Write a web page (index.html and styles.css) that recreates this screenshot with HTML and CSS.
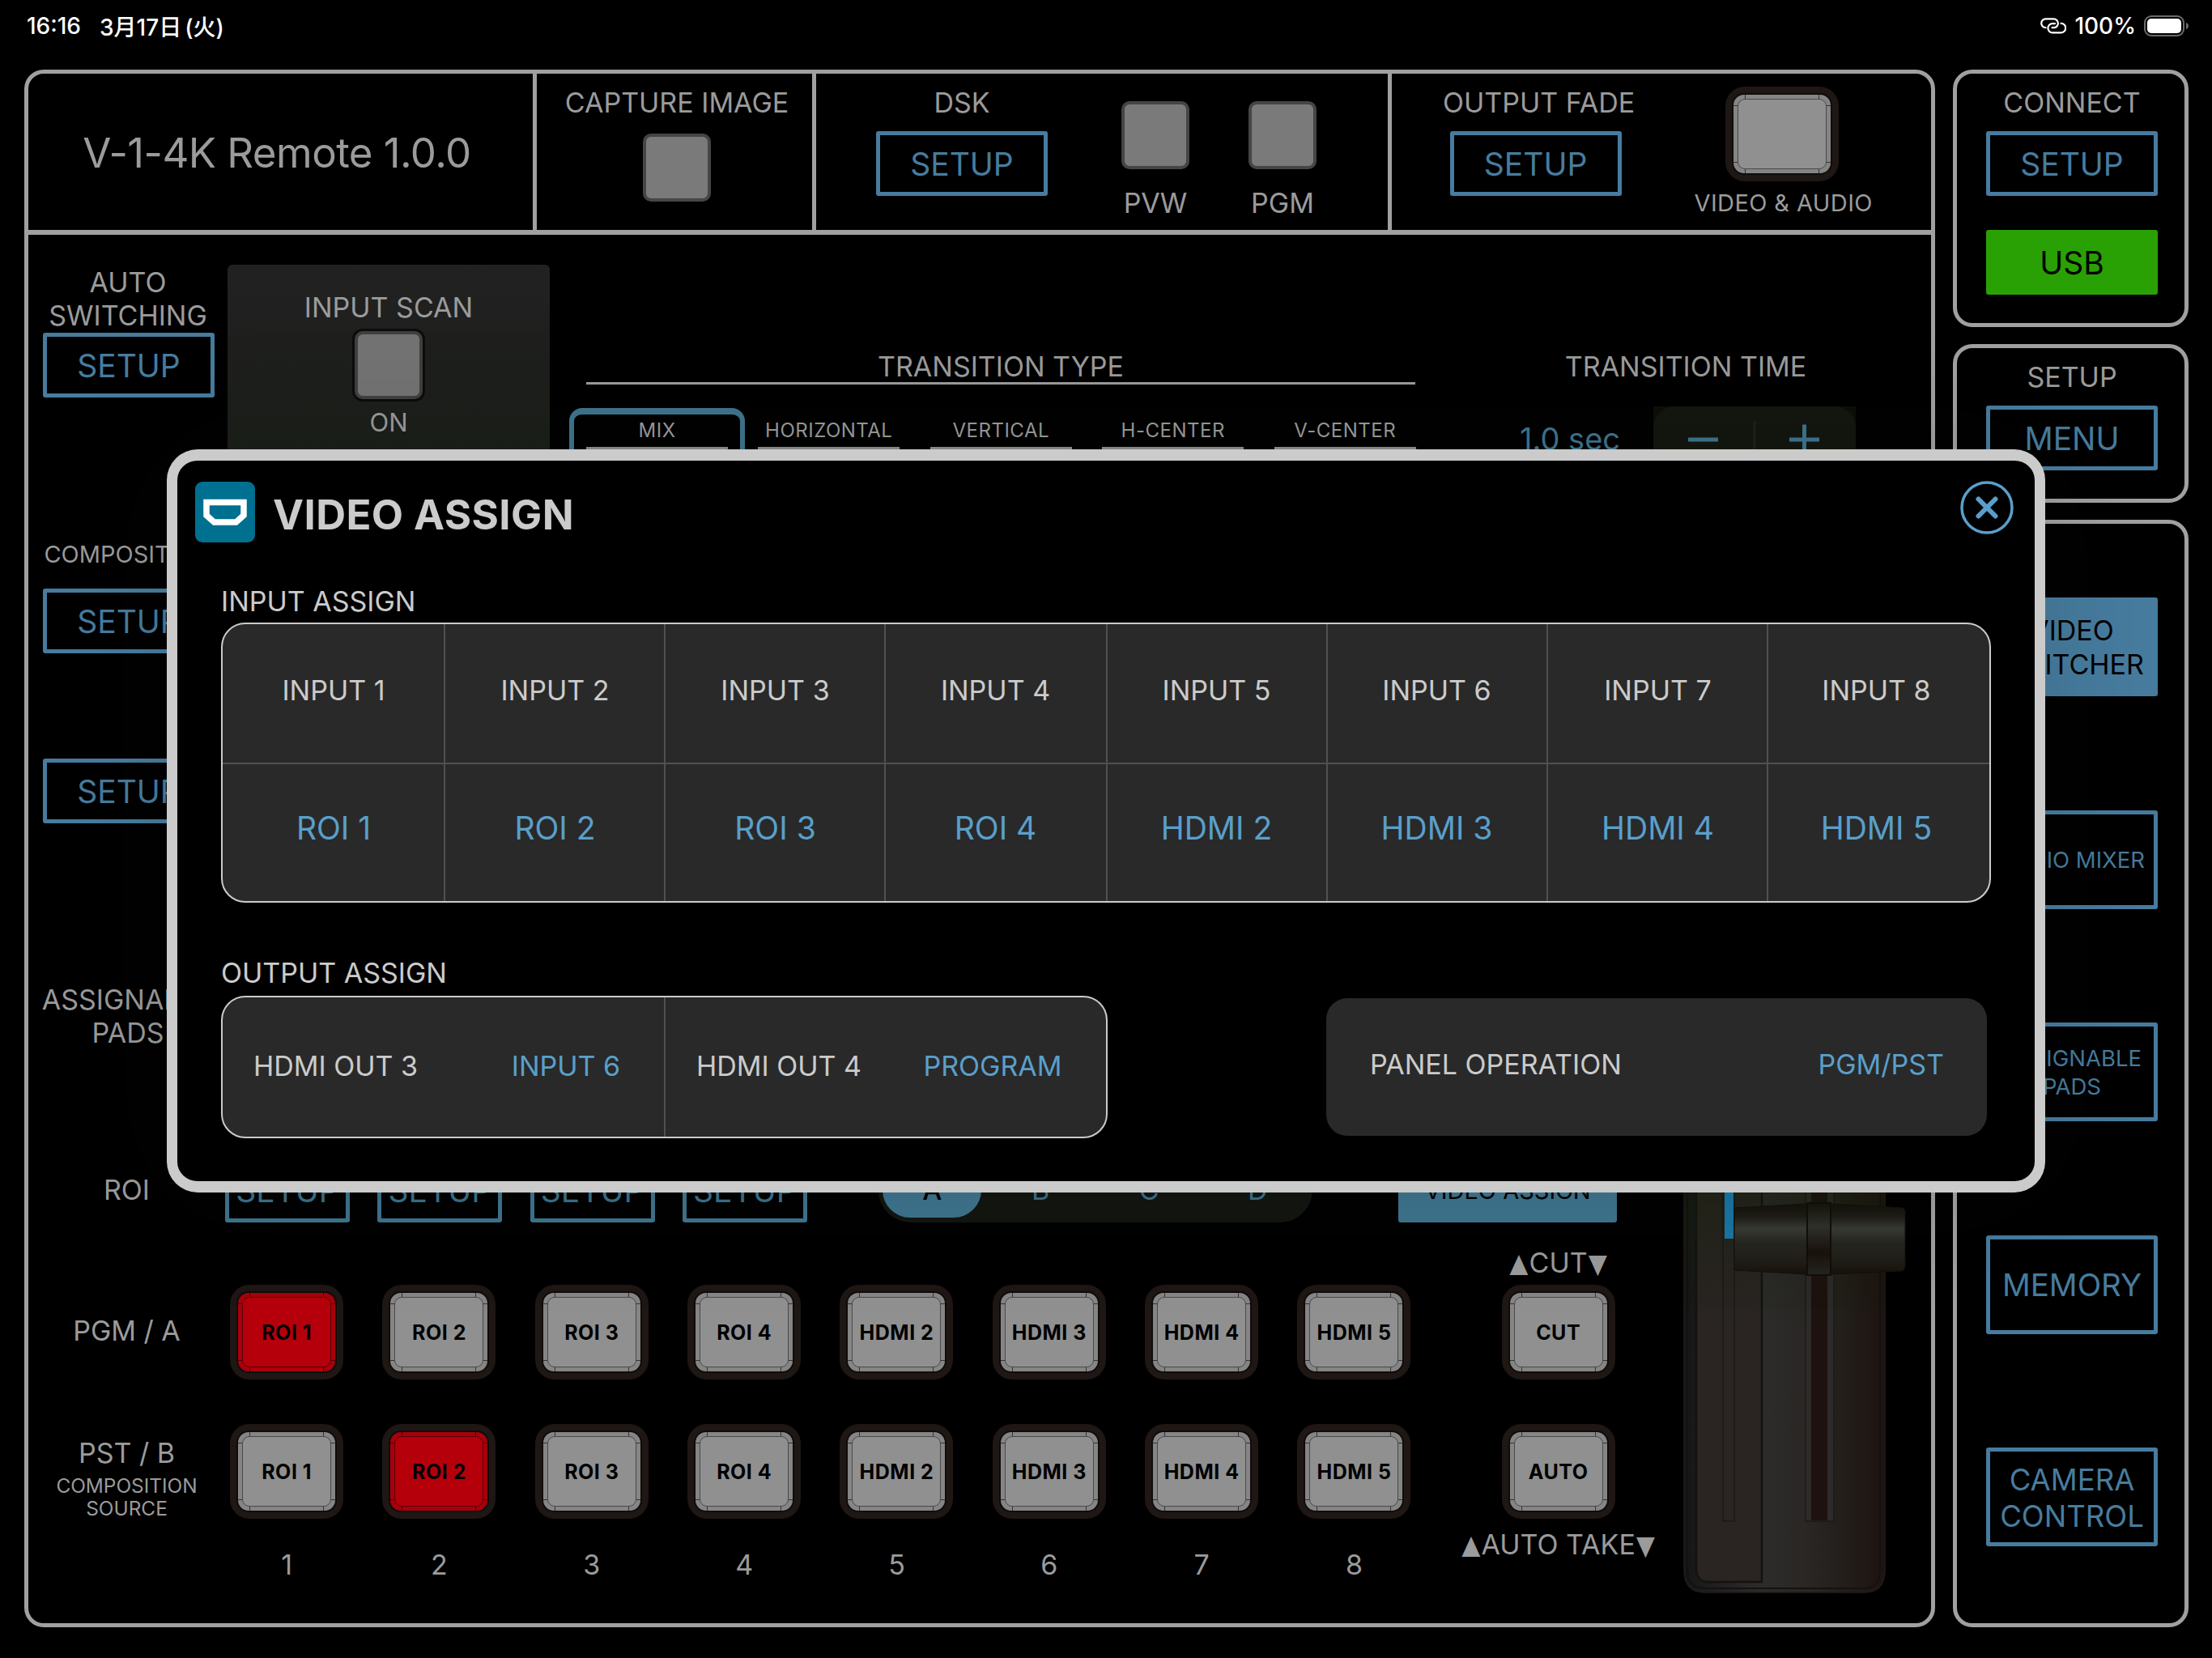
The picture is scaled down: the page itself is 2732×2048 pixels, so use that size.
FILE: index.html
```html
<!DOCTYPE html>
<html lang="ja">
<head>
  <meta charset="UTF-8" />
  <meta name="viewport" content="width=device-width, initial-scale=1.0"/>
  <title>V-1-4K Remote</title>
  <link rel="stylesheet" href="styles.css">
</head>
<body>
  <div class="status">
    <span class="time">16:16</span>
    <span class="date">3月17日<span class="day">(火)</span></span>
    <svg class="link-icon" width="32" height="20" viewBox="0 0 32 20" fill="none" stroke="#fff" stroke-width="2.2" stroke-linecap="round">
      <path d="M6.500 12.200A5.400 5.400 0 0 1 6.700 1.400H16.500A5.400 5.400 0 0 1 16.500 12.200H14.500"/>
      <path d="M25.500 6.800A5.800 5.800 0 0 1 25.300 18.400H15A5.600 5.600 0 0 1 15 7.200H18"/>
    </svg>
    <span class="percent">100%</span>
    <svg class="battery" width="56" height="26" viewBox="0 0 56 26">
      <rect x="1" y="1" width="48" height="24" rx="8" fill="none" stroke="#6b6b6b" stroke-width="2"/>
      <rect x="4" y="4" width="42" height="18" rx="5" fill="#fff"/>
      <path d="M52 9q3 1 3 4t-3 4z" fill="#6b6b6b"/>
    </svg>
  </div>

  <div class="screen">
    <div class="main">
      <div class="header">
        <div class="cell cell-title">V-1-4K Remote 1.0.0</div>
        <div class="cell cell-capture">
          <div class="group">
            <div class="label">CAPTURE IMAGE</div>
            <div class="square"></div>
          </div>
        </div>
        <div class="cell cell-dsk">
          <div class="group">
            <div class="label">DSK</div>
            <div class="box">SETUP</div>
          </div>
          <div class="group led">
            <div class="square"></div>
            <div class="label">PVW</div>
          </div>
          <div class="group led">
            <div class="square"></div>
            <div class="label">PGM</div>
          </div>
        </div>
        <div class="cell cell-fade">
          <div class="group">
            <div class="label fade-label">OUTPUT FADE</div>
            <div class="box">SETUP</div>
          </div>
          <div class="group fade-key">
            <div class="key"><div class="cap"><div class="face"></div></div></div>
            <div class="label small">VIDEO &amp; AUDIO</div>
          </div>
        </div>
      </div>

      <div class="body">
        <div class="names">
          <div class="label n-auto">AUTO<br>SWITCHING</div>
          <div class="box">SETUP</div>
          <div class="label small n-comp">COMPOSITION</div>
          <div class="box n-box1">SETUP</div>
          <div class="box n-box2">SETUP</div>
          <div class="label n-pads">ASSIGNABLE<br>PADS</div>
          <div class="label n-roi">ROI</div>
          <div class="label n-pgm">PGM / A</div>
          <div class="label n-pst">PST / B</div>
          <div class="label tiny">COMPOSITION<br>SOURCE</div>
        </div>

        <div class="work">
          <div class="top">
            <div class="scan">
              <div class="label">INPUT SCAN</div>
              <div class="square"></div>
              <div class="label on">ON</div>
            </div>
            <div class="trans-type">
              <div class="label head">TRANSITION TYPE</div>
              <div class="types">
                <div class="type active">MIX<i></i></div>
                <div class="type">HORIZONTAL<i></i></div>
                <div class="type">VERTICAL<i></i></div>
                <div class="type">H-CENTER<i></i></div>
                <div class="type">V-CENTER<i></i></div>
              </div>
            </div>
            <div class="trans-time">
              <div class="label">TRANSITION TIME</div>
              <div class="time-row">
                <span class="sec">1.0 sec</span>
                <div class="stepper">
                  <svg width="250" height="82" viewBox="0 0 250 82">
                    <rect width="250" height="82" rx="26" fill="#14160f"/>
                    <path d="M125 18v46" stroke="#1f201c" stroke-width="3"/>
                    <path d="M43 41h37M168 41h37M186.500 22.500v37" stroke="#3f748f" stroke-width="5"/>
                  </svg>
                </div>
              </div>
            </div>
          </div>

          <div class="bottom">
            <div class="controls">
              <div class="roi-row">
                <div class="box roi">SETUP</div>
                <div class="box roi">SETUP</div>
                <div class="box roi">SETUP</div>
                <div class="box roi">SETUP</div>
                <div class="segment">
                  <span class="seg on-seg">A</span>
                  <span class="seg">B</span>
                  <span class="seg">C</span>
                  <span class="seg">D</span>
                </div>
                <div class="box filled assign">VIDEO ASSIGN</div>
              </div>
              <div class="deck">
                <div class="bus">
                  <div class="key red"><div class="cap"><div class="face">ROI 1</div></div></div>
                  <div class="key"><div class="cap"><div class="face">ROI 2</div></div></div>
                  <div class="key"><div class="cap"><div class="face">ROI 3</div></div></div>
                  <div class="key"><div class="cap"><div class="face">ROI 4</div></div></div>
                  <div class="key"><div class="cap"><div class="face">HDMI 2</div></div></div>
                  <div class="key"><div class="cap"><div class="face">HDMI 3</div></div></div>
                  <div class="key"><div class="cap"><div class="face">HDMI 4</div></div></div>
                  <div class="key"><div class="cap"><div class="face">HDMI 5</div></div></div>
                  <div class="key"><div class="cap"><div class="face">ROI 1</div></div></div>
                  <div class="key red"><div class="cap"><div class="face">ROI 2</div></div></div>
                  <div class="key"><div class="cap"><div class="face">ROI 3</div></div></div>
                  <div class="key"><div class="cap"><div class="face">ROI 4</div></div></div>
                  <div class="key"><div class="cap"><div class="face">HDMI 2</div></div></div>
                  <div class="key"><div class="cap"><div class="face">HDMI 3</div></div></div>
                  <div class="key"><div class="cap"><div class="face">HDMI 4</div></div></div>
                  <div class="key"><div class="cap"><div class="face">HDMI 5</div></div></div>
                  <div class="label num">1</div>
                  <div class="label num">2</div>
                  <div class="label num">3</div>
                  <div class="label num">4</div>
                  <div class="label num">5</div>
                  <div class="label num">6</div>
                  <div class="label num">7</div>
                  <div class="label num">8</div>
                </div>
                <div class="takes">
                  <div class="label"><span class="tri">▲</span>CUT<span class="tri">▼</span></div>
                  <div class="key"><div class="cap"><div class="face">CUT</div></div></div>
                  <div class="key key-auto"><div class="cap"><div class="face">AUTO</div></div></div>
                  <div class="label take-label"><span class="tri">▲</span>AUTO TAKE<span class="tri">▼</span></div>
                </div>
              </div>
            </div>

            <!-- T-fader -->
            <svg class="fader" width="310" height="550" viewBox="0 -35 310 550">
              <defs>
                <linearGradient id="bed" x1="0" x2="1" y1="0" y2="0">
                  <stop offset="0" stop-color="#151616"/>
                  <stop offset=".38" stop-color="#2c2c2b"/>
                  <stop offset=".6" stop-color="#2a2725"/>
                  <stop offset=".8" stop-color="#221e1a"/>
                  <stop offset="1" stop-color="#1e1311"/>
                </linearGradient>
                <linearGradient id="shade" x1="0" x2="0" y1="0" y2="1">
                  <stop offset="0" stop-color="#101c00" stop-opacity=".35"/>
                  <stop offset=".4" stop-color="#101c00" stop-opacity="0"/>
                </linearGradient>
                <linearGradient id="grip" x1="0" x2="0" y1="0" y2="1">
                  <stop offset="0" stop-color="#16110b"/>
                  <stop offset=".18" stop-color="#1e1c17"/>
                  <stop offset=".35" stop-color="#393a35"/>
                  <stop offset=".55" stop-color="#272721"/>
                  <stop offset=".8" stop-color="#211e18"/>
                  <stop offset="1" stop-color="#17110b"/>
                </linearGradient>
                <linearGradient id="ring" x1="0" x2="0" y1="0" y2="1">
                  <stop offset="0" stop-color="#15130c"/>
                  <stop offset=".33" stop-color="#30312b"/>
                  <stop offset=".68" stop-color="#19120d"/>
                  <stop offset="1" stop-color="#25251f"/>
                </linearGradient>
              </defs>
              <path d="M20-35H268V474Q268 502 242 502H46Q20 502 20 474Z" fill="url(#bed)" stroke="#231c1a" stroke-width="1.500"/>
              <path d="M24-35V474Q24 497 47 497H241Q262 497 262 474V-35" fill="none" stroke="#141110" stroke-width="2"/>
              <path d="M36-35H116V489H50Q36 489 36 474Z" fill="#2a2523"/>
              <path d="M35-35V474Q36 489 50 489H116V-35" fill="none" stroke="#151210" stroke-width="2.500"/>
              <rect x="68" y="-35" width="14" height="449" fill="#292523" stroke="#191614" stroke-width="1.200"/>
              <rect x="170" y="-35" width="35" height="449" fill="#2c2b2a" stroke="#1a1715" stroke-width="1.200"/>
              <rect x="177" y="-35" width="20" height="448" fill="#1d120f"/>
              <path d="M20-35H268V474Q268 502 242 502H46Q20 502 20 474Z" fill="url(#shade)"/>
              <rect x="70" y="-35" width="11" height="100" fill="#1a75a6"/>
              <path d="M82 27 171 22H202L290 27Q293 28 293 32V99Q293 104 289 105L202 109H171L82 104Z" fill="url(#grip)" stroke="#15100b" stroke-width="1"/>
              <path d="M172 21H201V110H172Z" fill="url(#ring)" stroke="#120e09" stroke-width="2"/>
            </svg>
          </div>
        </div>
      </div>
    </div>

    <div class="side">
      <div class="panel connect">
        <div class="label">CONNECT</div>
        <div class="box">SETUP</div>
        <div class="box usb">USB</div>
      </div>
      <div class="panel setup">
        <div class="label">SETUP</div>
        <div class="box">MENU</div>
      </div>
      <div class="panel pages">
        <div class="box page filled">VIDEO<br>SWITCHER</div>
        <div class="box page page-small">AUDIO MIXER</div>
        <div class="box page page-small">ASSIGNABLE<br>PADS</div>
        <div class="box page page-memory">MEMORY</div>
        <div class="box page page-camera">CAMERA<br>CONTROL</div>
      </div>
    </div>
  </div>

  <div class="modal">
    <div class="modal-head">
      <svg class="logo" width="75" height="75" viewBox="0 0 75 75">
        <rect width="74" height="75" rx="9" fill="#007090"/>
        <path d="M14 25.500H60V41.500L50.500 50H23.500L14 41.500Z" fill="none" stroke="#fff" stroke-width="7.500"/>
      </svg>
      <div class="modal-title">VIDEO ASSIGN</div>
      <svg class="close" width="66" height="66" viewBox="0 0 66 66" fill="none" stroke="#5a9fca">
        <circle cx="33" cy="33" r="31" stroke-width="3.500"/>
        <path d="M22.500 22.500 43.500 43.500M43.500 22.500 22.500 43.500" stroke-width="6" stroke-linecap="round"/>
      </svg>
    </div>

    <div class="caption">INPUT ASSIGN</div>
    <div class="inputs">
      <div>INPUT 1</div>
      <div>INPUT 2</div>
      <div>INPUT 3</div>
      <div>INPUT 4</div>
      <div>INPUT 5</div>
      <div>INPUT 6</div>
      <div>INPUT 7</div>
      <div>INPUT 8</div>
      <div class="value">ROI 1</div>
      <div class="value">ROI 2</div>
      <div class="value">ROI 3</div>
      <div class="value">ROI 4</div>
      <div class="value">HDMI 2</div>
      <div class="value">HDMI 3</div>
      <div class="value">HDMI 4</div>
      <div class="value">HDMI 5</div>
    </div>

    <div class="caption caption-out">OUTPUT ASSIGN</div>
    <div class="outputs">
      <div class="outs">
        <div class="out"><span>HDMI OUT 3</span><span class="link">INPUT 6</span></div>
        <div class="out"><span>HDMI OUT 4</span><span class="link">PROGRAM</span></div>
      </div>
      <div class="operation"><span>PANEL OPERATION</span><span class="blue">PGM/PST</span></div>
    </div>
  </div>
</body>
</html>
```
FILE: styles.css
```css
* {
  box-sizing: border-box;
}
body {
  margin: 0;
  width: 2732px;
  height: 2048px;
  overflow: hidden;
  position: relative;
  background: #000;
  color: #9b9b9b;
  font-family: Inter, "Noto Sans CJK JP", sans-serif;
}

/* status bar */
.status {
  display: flex;
  align-items: center;
  height: 86px;
  padding: 0 28px 22px 33px;
  color: #fff;
  font-size: 28px;
  font-weight: 500;
}
.date {
  margin-left: 23px;
}
.day {
  margin-left: 4px;
}
.link-icon {
  margin-left: auto;
}
.percent {
  margin-left: 10px;
}
.battery {
  margin-left: 10px;
}

/* frame */
.screen {
  display: flex;
  gap: 22px;
  height: 1924px;
  padding-left: 30px;
}
.main {
  width: 2360px;
  border: 5px solid #a0a0a0;
  border-radius: 24px;
}
.header {
  display: flex;
  height: 199px;
  border-bottom: 6px solid #a0a0a0;
}
.cell {
  display: flex;
  border-right: 5px solid #a0a0a0;
}
.cell-title {
  width: 628px;
  padding: 2px 9px 0 0;
  align-items: center;
  justify-content: center;
  font-size: 51px;
  letter-spacing: -0.55px;
}
.cell-capture {
  width: 345px;
  padding-left: 6px;
  justify-content: center;
}
.cell-dsk {
  width: 711px;
  padding-left: 74px;
}
.cell-fade {
  flex: 1;
  border-right: none;
  padding-left: 59px;
}
.group {
  display: flex;
  flex-direction: column;
  align-items: center;
  padding-top: 16px;
}
.group .box {
  margin-top: 15px;
}
.group .label + .square {
  margin-top: 18px;
}
.led {
  width: 100px;
  padding-top: 34px;
  margin-left: 83px;
}
.led + .led {
  margin-left: 57px;
}
.led .label {
  margin-top: 22px;
}
.fade-label {
  margin: 0 -4px 0 4px;
}
.fade-key {
  width: 240px;
  margin-left: 66px;
}
.fade-key .label {
  margin-top: 7px;
  margin-left: 3px;
  letter-spacing: 0.4px;
}

.label {
  font-size: 34px;
  line-height: 40px;
  text-align: center;
  white-space: nowrap;
}
.small {
  font-size: 29px;
}
.tiny {
  font-size: 24.4px;
  line-height: 28px;
}
.box {
  display: flex;
  align-items: center;
  justify-content: center;
  width: 212px;
  height: 80px;
  border: 5px solid #477c9f;
  border-radius: 3px;
  color: #477c9f;
  font-size: 39px;
  text-align: center;
}
.filled {
  background: #477c9f;
  color: #000;
}
.square {
  width: 84px;
  height: 84px;
  border: 4px solid #454545;
  border-radius: 10px;
  background: #7a7a7a;
}

/* hardware style keys */
.key {
  width: 140px;
  height: 117px;
  padding: 8px;
  border-radius: 24px;
  background: #1e1714;
}
.cap {
  height: 101px;
  padding: 5px;
  border: 2px solid #0f0c0b;
  border-radius: 15px;
  background:
    linear-gradient(#333, #333) 14px 0 / 1px 100% no-repeat,
    linear-gradient(#333, #333) right 14px top 0 / 1px 100% no-repeat,
    linear-gradient(#333, #333) 0 13px / 100% 1px no-repeat,
    linear-gradient(#333, #333) left 0 bottom 13px / 100% 1px no-repeat,
    #858585;
}
.face {
  display: flex;
  align-items: center;
  justify-content: center;
  height: 87px;
  border: 1px solid #4a4a4a;
  border-radius: 9px;
  background: #909090;
  color: #000;
  font-size: 25px;
  font-weight: 700;
  letter-spacing: 0.5px;
  white-space: nowrap;
}
.red .cap {
  background:
    linear-gradient(#4a0006, #4a0006) 14px 0 / 1px 100% no-repeat,
    linear-gradient(#4a0006, #4a0006) right 14px top 0 / 1px 100% no-repeat,
    linear-gradient(#4a0006, #4a0006) 0 13px / 100% 1px no-repeat,
    linear-gradient(#4a0006, #4a0006) left 0 bottom 13px / 100% 1px no-repeat,
    #a8000b;
}
.red .face {
  background: #b5000c;
  border-color: #5a0006;
}

/* left names */
.body {
  display: flex;
}
.names {
  width: 246px;
  display: flex;
  flex-direction: column;
  align-items: center;
}
.names .box {
  margin-left: 2px;
}
.names .n-auto {
  margin-top: 38px;
  margin-bottom: 1px;
  line-height: 41px;
}
.n-comp {
  margin-top: 174px;
}
.n-box1 {
  margin-top: 22px;
}
.n-box2 {
  margin-top: 130px;
}
.n-pads {
  margin-top: 197px;
  line-height: 41px;
}
.n-roi {
  margin-top: 154px;
}
.names .n-roi,
.names .n-pgm,
.names .n-pst,
.names .tiny {
  margin-right: 3px;
}
.n-pgm {
  margin-top: 134px;
}
.n-pst {
  margin-top: 111px;
  margin-bottom: 6px;
}

/* upper work area */
.top {
  display: flex;
  align-items: flex-start;
  height: 1140px;
}
.scan {
  display: flex;
  flex-direction: column;
  align-items: center;
  width: 398px;
  height: 400px;
  margin-top: 37px;
  padding-top: 33px;
  border-radius: 6px;
  background: linear-gradient(#212121, #1b1e19 240px);
}
.scan .square {
  margin-top: 9px;
  background: #737373;
  border-color: #40403f;
  box-shadow: 0 0 0 3px #0c0c0c;
}
.on {
  margin-top: 9px;
  font-size: 31px;
}
.trans-type {
  width: 1045px;
  margin-left: 24px;
  padding-top: 143px;
}
.head {
  margin-left: 21px;
  height: 42px;
  border-bottom: 3px solid #9b9b9b;
}
.types {
  display: flex;
  gap: 5px;
  margin-top: 29px;
}
.type {
  display: flex;
  flex-direction: column;
  align-items: center;
  flex: none;
  width: 207.5px;
  height: 200px;
  padding: 5px 8px 0;
  border: 8px solid transparent;
  border-width: 8px 6px;
  border-radius: 16px;
  font-size: 24px;
  line-height: 30px;
  letter-spacing: 0.5px;
}
.type.active {
  width: 217px;
  margin-right: -5px;
  border-color: #3f748f;
}
.type i {
  width: 175px;
  height: 100px;
  margin-top: 5px;
  background: #8d908a;
}
.trans-time {
  width: 420px;
  margin: 143px 0 0 128px;
}
.trans-time .label {
  margin-right: 8px;
}
.time-row {
  display: flex;
  align-items: center;
  justify-content: space-between;
  margin-top: 29px;
}
.sec {
  margin-left: 1px;
  padding-bottom: 3px;
  font-size: 38px;
  color: #3f748f;
}
.stepper {
  width: 250px;
  height: 82px;
  margin-right: 4px;
  background: #0c0e08;
}

/* lower work area */
.bottom {
  display: flex;
}
.controls {
  width: 1779px;
}
.roi-row {
  display: flex;
  height: 80px;
  margin-left: -3px;
}
.roi {
  width: 154px;
  margin-right: 34.3px;
  color: #3c718c;
  border-color: #3f748f;
}
.segment {
  display: flex;
  width: 536px;
  height: 80px;
  margin-left: 54px;
  padding: 6px 0 6px 5px;
  border-radius: 40px;
  background: #131510;
}
.seg {
  width: 134px;
  line-height: 68px;
  text-align: center;
  font-size: 34px;
  color: #3c718c;
}
.on-seg {
  width: 122px;
  margin-right: 6px;
  border-radius: 34px;
  background: #3f748f;
  color: #000;
  font-weight: 500;
}
.assign {
  width: 270px;
  margin-left: 106px;
  background: #3f748f;
  border-color: #3f748f;
  font-size: 29px;
}
.deck {
  display: flex;
}
.bus {
  display: grid;
  grid-template-columns: repeat(8, 188.33px);
  justify-items: center;
  align-content: start;
  row-gap: 55px;
  height: 400px;
  margin: 77px 0 0 -21px;
}
.num {
  margin-top: -18px;
}
.takes {
  display: flex;
  flex-direction: column;
  align-items: center;
  width: 240px;
  margin: 30px 0 0 38px;
}
.tri {
  display: inline-block;
  font-size: 25px;
  line-height: 25px;
  transform: scaleY(1.3);
}
.takes .key {
  margin-top: 7px;
}
.takes .key-auto {
  margin-top: 55px;
}
.take-label {
  margin-top: 12px;
}

/* right column */
.side {
  display: flex;
  flex-direction: column;
  gap: 21px;
}
.panel {
  display: flex;
  flex-direction: column;
  align-items: center;
  width: 291px;
  padding: 16px 0 0 3px;
  border: 5px solid #a0a0a0;
  border-radius: 24px;
}
.panel .label + .box {
  margin-top: 15px;
}
.connect {
  height: 318px;
}
.usb {
  margin-top: 42px;
  background: #29a104;
  border-color: #29a104;
  color: #000;
}
.setup {
  height: 196px;
}
.pages {
  flex: 1;
  padding-top: 91px;
  gap: 140.5px;
}
.page {
  flex: none;
  height: 122px;
  padding-top: 2px;
  font-size: 34px;
  line-height: 42px;
}
.page-small {
  font-size: 27.5px;
  line-height: 35px;
}
.page-memory {
  padding-top: 0;
  font-size: 38.5px;
}
.page-camera {
  padding-top: 3px;
  font-size: 36.5px;
  line-height: 45px;
}

/* dialog */
.modal {
  position: absolute;
  left: 206px;
  top: 555px;
  width: 2320px;
  height: 918px;
  padding: 26px 0 0 54px;
  border: 14px solid #cbcbcb;
  border-width: 14px 13px;
  border-radius: 38px;
  background: #000;
  color: #cbcbcb;
  font-size: 34px;
  box-shadow: 0 0 160px rgba(0, 25, 0, 0.14);
}
.modal-head {
  display: flex;
  height: 75px;
  margin-left: -32px;
}
.modal-title {
  margin: 3px 0 0 21px;
  font-size: 51px;
  line-height: 75px;
  font-weight: 700;
  letter-spacing: 0.4px;
}
.close {
  margin: -1px 26px 0 auto;
}
.caption {
  margin-top: 53px;
  line-height: 40px;
}
.caption-out {
  margin-top: 67px;
}
.inputs {
  display: grid;
  grid-template-columns: 275px 272px 272px 274px 272px 272px 272px 1fr;
  grid-template-rows: 173px 1fr;
  width: 2186px;
  height: 346px;
  margin-top: 6px;
  border: 2px solid #cbcbcb;
  border-radius: 30px;
  background: #292929;
  overflow: hidden;
}
.inputs div {
  display: flex;
  align-items: center;
  justify-content: center;
  padding: 0 0 8px 1px;
  border-right: 2px solid #505050;
  border-bottom: 2px solid #505050;
}
.inputs div:nth-child(8n + 4),
.inputs div:nth-child(8n + 5),
.inputs div:nth-child(8n + 6) {
  padding-left: 0;
  padding-right: 1px;
}
.inputs div:nth-child(8n) {
  padding-left: 0;
  padding-right: 6px;
  border-right: none;
}
.inputs .value {
  border-bottom: none;
  padding-bottom: 12px;
  font-size: 39px;
}
.value,
.link,
.blue {
  color: #5a9fca;
}
.outputs {
  display: flex;
  align-items: center;
  margin-top: 8px;
}
.outs {
  display: flex;
  width: 1095px;
  height: 176px;
  border: 2px solid #cbcbcb;
  border-radius: 30px;
  background: #292929;
}
.out {
  display: flex;
  align-items: center;
  width: 545px;
  padding: 0 0 4px 38px;
}
.out + .out {
  border-left: 2px solid #505050;
}
.link {
  width: 200px;
  margin-left: 83px;
  text-align: center;
}
.out + .out .link {
  margin-left: 62px;
}
.operation {
  display: flex;
  align-items: center;
  justify-content: space-between;
  width: 816px;
  height: 170px;
  margin-left: 270px;
  padding: 0 53px 8px 54px;
  border-radius: 26px;
  background: #292929;
}
```
